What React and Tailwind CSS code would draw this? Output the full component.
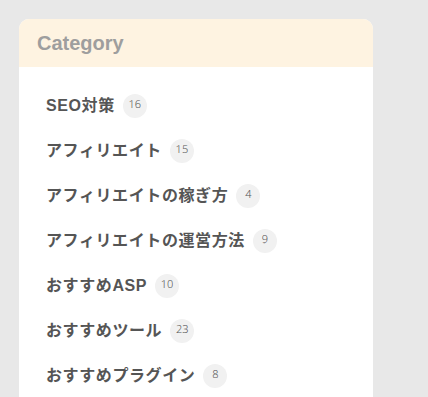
import React from "react";

const categories = [
  { name: "SEO対策", count: 16 },
  { name: "アフィリエイト", count: 15 },
  { name: "アフィリエイトの稼ぎ方", count: 4 },
  { name: "アフィリエイトの運営方法", count: 9 },
  { name: "おすすめASP", count: 10 },
  { name: "おすすめツール", count: 23 },
  { name: "おすすめプラグイン", count: 8 },
];

export default function App() {
  return (
    <div className="w-full h-[397px] overflow-hidden bg-[#e8e8e8] pt-[19px] pl-[19px] font-['Liberation_Sans','Noto_Sans_CJK_JP',sans-serif]">
      <div className="w-[354px] h-[378px] rounded-t-[10px] overflow-hidden bg-white">
        <div className="h-[48px] bg-[#fef3e1] flex items-center px-[18px]">
          <h2 className="text-[20px] font-bold text-[#9e9e9e]">Category</h2>
        </div>
        <ul className="pt-[16px] px-[27px]">
          {categories.map((cat) => (
            <li key={cat.name} className="h-[45px] flex items-center gap-2">
              <span className="text-[16px] font-bold tracking-[0.6px] text-[#555]">{cat.name}</span>
              <span className="w-6 h-6 rounded-full bg-[#f1f1f1] flex items-center justify-center text-[11px] font-light text-[#555] font-['Noto_Sans',sans-serif] [text-rendering:geometricPrecision]">
                {cat.count}
              </span>
            </li>
          ))}
        </ul>
      </div>
    </div>
  );
}
